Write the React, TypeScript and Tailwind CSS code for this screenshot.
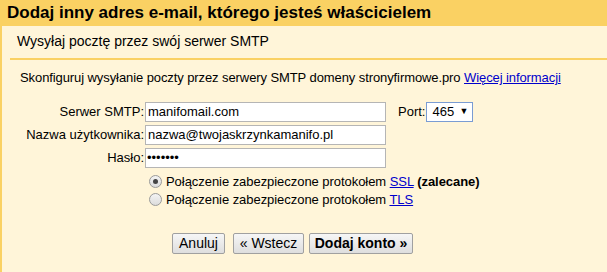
import React from "react";

export default function App() {
  const btn =
    "h-[21px] border border-[#a0a0a0] rounded-[2px] bg-gradient-to-b from-[#f6f6f6] to-[#dedede] leading-[19px] text-center";
  return (
    <div className="w-[607px] h-[272px] bg-[#fff5d9] text-black overflow-hidden" style={{ fontFamily: '"Liberation Sans", Arial, sans-serif' }}>
      <div className="h-[26px] bg-[#fad163] pl-[7px] pt-[3px] text-[17px] font-bold leading-[20px]">
        Dodaj inny adres e-mail, którego jesteś właścicielem
      </div>
      <div className="border-l-[2px] border-[#fad163] h-[246px] pt-[8px]">
        <div className="ml-[8px] border-b-[2px] border-[#fad163] pl-[7px] pb-[9px] text-[14px] leading-[15px]">
          Wysyłaj pocztę przez swój serwer SMTP
        </div>
        <div className="pl-[18px] pt-[10px] text-[13px] leading-[15px] tracking-[-0.09px]">
          Skonfiguruj wysyłanie poczty przez serwery SMTP domeny stronyfirmowe.pro{" "}
          <a className="text-[#0000cc] underline" href="#">Więcej informacji</a>
        </div>
        <div className="mt-[17px] flex flex-col gap-[3px] text-[13px]">
          <div className="flex items-center h-[20px]">
            <div className="w-[143px] text-right pr-[1px]">Serwer SMTP:</div>
            <div className="w-[241px] h-[20px] bg-white border border-[#b5b5b5] px-[2px] leading-[18px]">manifomail.com</div>
            <div className="ml-[12px]">Port:</div>
            <div className="ml-[1px] w-[47px] h-[20px] bg-white border border-[#7a9cd3] flex items-center pl-[5px] pr-[4px] justify-between">
              <span>465</span>
              <span className="text-[9px]">▼</span>
            </div>
          </div>
          <div className="flex items-center h-[20px]">
            <div className="w-[143px] text-right pr-[1px]">Nazwa użytkownika:</div>
            <div className="w-[241px] h-[20px] bg-white border border-[#b5b5b5] px-[2px] leading-[18px]">nazwa@twojaskrzynkamanifo.pl</div>
          </div>
          <div className="flex items-center h-[20px]">
            <div className="w-[143px] text-right pr-[1px]">Hasło:</div>
            <div className="w-[241px] h-[20px] bg-white border border-[#b5b5b5] px-[1px] leading-[18px] text-[13px]">•••••••</div>
          </div>
        </div>
        <div className="ml-[147px] mt-[6px] flex flex-col gap-[3px] text-[13px] tracking-[-0.05px]">
          <div className="flex items-center h-[15px]">
            <span className="w-[13px] h-[13px] rounded-full border border-[#9a9a9a] bg-gradient-to-b from-[#f4f4f4] to-[#dcdcdc] flex items-center justify-center">
              <span className="w-[5px] h-[5px] rounded-full bg-[#444]" />
            </span>
            <span className="ml-[4px]">Połączenie zabezpieczone protokołem <a className="text-[#0000cc] underline" href="#">SSL</a> <b>(zalecane)</b></span>
          </div>
          <div className="flex items-center h-[15px]">
            <span className="w-[13px] h-[13px] rounded-full border border-[#9a9a9a] bg-gradient-to-b from-[#f4f4f4] to-[#dcdcdc]" />
            <span className="ml-[4px]">Połączenie zabezpieczone protokołem <a className="text-[#0000cc] underline" href="#">TLS</a></span>
          </div>
        </div>
        <div className="ml-[170px] mt-[26px] flex text-[14px]">
          <button className={`${btn} w-[53px]`}>Anuluj</button>
          <button className={`${btn} w-[71px] ml-[8px]`}>« Wstecz</button>
          <button className={`${btn} w-[104px] ml-[5px] font-bold`}>Dodaj konto »</button>
        </div>
      </div>
    </div>
  );
}
